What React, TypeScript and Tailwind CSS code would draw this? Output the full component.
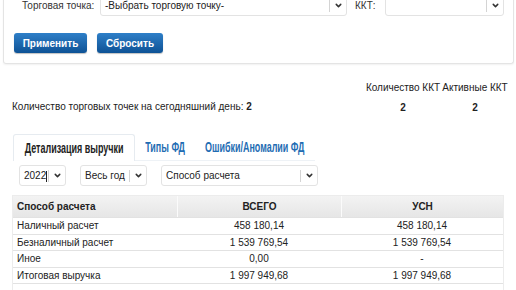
import { ChevronDown } from 'lucide-react'

const rows = [
  { name: 'Наличный расчет', total: '458 180,14', usn: '458 180,14' },
  { name: 'Безналичный расчет', total: '1 539 769,54', usn: '1 539 769,54' },
  { name: 'Иное', total: '0,00', usn: '-' },
  { name: 'Итоговая выручка', total: '1 997 949,68', usn: '1 997 949,68' },
]

function Select({ text, className, caret }: { text: string; className: string; caret?: boolean }) {
  return (
    <div
      className={`flex shrink-0 items-center h-[21px] rounded-[3px] border border-[#e3e3e3] bg-white pl-[4px] pr-[3px] ${className}`}
    >
      <span className="flex-1 min-w-0 whitespace-nowrap text-[10px] text-[#222]">
        {text}
        {caret && <span className="inline-block w-px h-[11px] bg-[#222] align-middle" />}
      </span>
      <span className="w-px h-[12px] bg-[#d4d4d4] ml-[3px] mr-[4px]" />
      <ChevronDown size={9} strokeWidth={4} className="text-[#333] shrink-0" />
    </div>
  )
}

// condensed bold label (no narrow font installed, so squeeze it)
function TabLabel({ text }: { text: string }) {
  return <span className="inline-block scale-x-[0.64] whitespace-nowrap">{text}</span>
}

export default function App() {
  return (
    <div className="w-[516px] h-[290px] overflow-hidden bg-white font-['Liberation_Sans',Arial,sans-serif] text-[#333]">
      {/* filter panel */}
      <div className="ml-[3px] w-[511px] -mt-[7px] h-[71px] border border-t-0 border-[#e4e4e4] rounded-b-[3px] shadow-[0_1px_2px_rgba(0,0,0,0.06)]">
        <div className="flex items-center h-[24px] pt-[1px]">
          <span className="ml-[18px] w-[78px] shrink-0 whitespace-nowrap text-[10px] text-[#333]">Торговая точка:</span>
          <Select text="-Выбрать торговую точку-" className="w-[247px]" />
          <span className="ml-[8px] w-[30px] shrink-0 whitespace-nowrap text-[10px] text-[#333]">ККТ:</span>
          <Select text="" className="w-[119px]" />
        </div>
        <div className="flex gap-[10px] ml-[10px] mt-[16px]">
          <button className="h-[20px] w-[73px] rounded-[3px] bg-gradient-to-b from-[#2e7fc8] to-[#0d5295] text-[10px] font-bold text-white shadow-[0_1px_1px_rgba(0,0,0,0.25)]">
            Применить
          </button>
          <button className="h-[20px] w-[66px] rounded-[3px] bg-gradient-to-b from-[#2e7fc8] to-[#0d5295] text-[10px] font-bold text-white shadow-[0_1px_1px_rgba(0,0,0,0.25)]">
            Сбросить
          </button>
        </div>
      </div>

      {/* stats */}
      <div className="flex items-end mt-[18px] text-[10px] leading-[12px] text-[#222]">
        <div className="ml-[12px] mb-[1px] flex-1 whitespace-nowrap">
          Количество торговых точек на сегодняшний день: <b>2</b>
        </div>
        <div className="flex mr-[9px]">
          <div className="flex flex-col items-center w-[80px]">
            <span className="whitespace-nowrap">Количество ККТ</span>
            <b className="mt-[8px]">2</b>
          </div>
          <div className="flex flex-col items-center w-[64px]">
            <span className="whitespace-nowrap">Активные ККТ</span>
            <b className="mt-[8px]">2</b>
          </div>
        </div>
      </div>

      {/* tabs */}
      <div className="flex items-end mt-[20px] ml-[13px] w-[302px] h-[27px] border-b border-[#eef2f6] font-bold text-[14px]">
        <div className="h-[27px] -mb-px w-[122px] flex items-center justify-center border border-b-0 border-[#e6ebf0] rounded-t-[3px] bg-white text-[#222]">
          <TabLabel text="Детализация выручки" />
        </div>
        <div className="h-[26px] w-[40px] ml-[10px] flex items-center justify-center text-[#1f6db3]">
          <TabLabel text="Типы ФД" />
        </div>
        <div className="h-[26px] w-[105px] ml-[17px] flex items-center justify-center text-[#1f6db3]">
          <TabLabel text="Ошибки/Аномалии ФД" />
        </div>
      </div>

      {/* period selects */}
      <div className="flex items-center mt-[4px] ml-[19px]">
        <Select text="2022" caret className="w-[47px]" />
        <Select text="Весь год" className="w-[67px] ml-[14px]" />
        <Select text="Способ расчета" className="w-[157px] ml-[14px]" />
      </div>

      {/* table */}
      <div className="mt-[9px] ml-[12px] w-[492px] border-l border-r border-t border-[#ececec] text-[10px] text-[#222]">
        <div className="grid grid-cols-[164px_164px_162px] h-[21px] bg-gradient-to-b from-[#f3f3f3] to-[#e6e6e6] font-bold">
          <div className="flex items-center pl-[4px]">Способ расчета</div>
          <div className="flex items-center justify-center border-l border-[#fbfbfb]">ВСЕГО</div>
          <div className="flex items-center justify-center border-l border-[#fbfbfb]">УСН</div>
        </div>
        {rows.map((r) => (
          <div key={r.name} className="grid grid-cols-[164px_164px_162px] h-[16.5px] border-t border-[#e2e2e2]">
            <div className="flex items-center pl-[4px]">{r.name}</div>
            <div className="flex items-center justify-center">{r.total}</div>
            <div className="flex items-center justify-center">{r.usn}</div>
          </div>
        ))}
        <div className="h-[10px] border-t border-[#e2e2e2]" />
      </div>
    </div>
  )
}
